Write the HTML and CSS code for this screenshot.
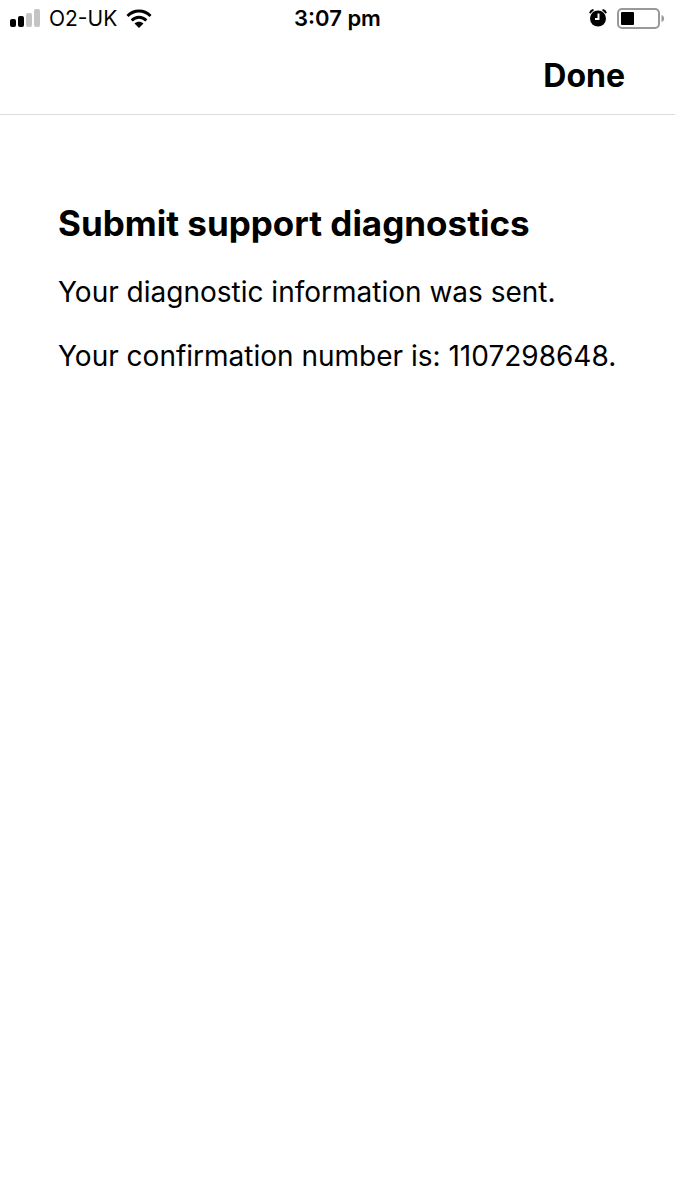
FILE: index.html
```html
<!DOCTYPE html>
<html lang="en">
<head>
    <meta charset="UTF-8">
    <meta name="viewport" content="width=device-width, initial-scale=1.0">
    <title>Submit support diagnostics</title>
    <link rel="stylesheet" href="styles.css">
</head>
<body>
    <div class="status-bar">
        <div class="carrier">
            <svg class="signal" width="30" height="18" viewBox="0 0 30 18" aria-hidden="true">
                <rect x="0" y="10" width="6" height="8" rx="2"/>
                <rect x="8" y="7" width="6" height="11" rx="2"/>
                <rect class="off" x="16" y="4" width="6" height="14" rx="2"/>
                <rect class="off" x="24" y="0" width="6" height="18" rx="2"/>
            </svg>
            <span>O2-UK</span>
            <svg class="wifi" width="26" height="19" viewBox="0 0 26 19" aria-hidden="true">
                <path d="M1.500 7C8 0.300 18 0.300 24.500 7"/>
                <path d="M5.700 11.500C10 7.200 16 7.200 20.300 11.500"/>
                <path class="dot" d="M13 19L8.500 14.500C11 12.200 15 12.200 17.500 14.500Z"/>
            </svg>
        </div>
        <div class="time">3:07 pm</div>
        <div class="indicators">
            <svg class="alarm" width="18" height="18" viewBox="0 0 18 18" aria-hidden="true">
                <circle cx="9" cy="9.500" r="8"/>
                <path class="bell" d="M1 4.200C1.500 2.500 2.800 1.200 4.500 0.900M17 4.200C16.500 2.500 15.200 1.200 13.500 0.900"/>
                <path class="hands" d="M9.500 4.500V10H6"/>
            </svg>
            <svg class="battery" width="48" height="21" viewBox="0 0 48 21" aria-hidden="true">
                <rect class="case" x="1" y="1" width="41" height="19" rx="4"/>
                <rect x="4" y="4" width="13" height="13" rx="1"/>
                <path class="tip" d="M44.500 7C48 8 48 13 44.500 14Z"/>
            </svg>
        </div>
    </div>

    <header>
        <button type="button" class="done">Done</button>
    </header>

    <main>
        <h1>Submit support diagnostics</h1>
        <p>Your diagnostic information was sent.</p>
        <p>Your confirmation number is: 1107298648.</p>
    </main>
</body>
</html>
```

FILE: styles.css
```css
body {
    margin: 0;
    background-color: #fff;
    color: #000;
    font-family: Inter, "Liberation Sans", sans-serif;
}
.status-bar {
    display: grid;
    grid-template-columns: 1fr auto 1fr;
    align-items: center;
    height: 36px;
    padding: 0 10px;
}
.carrier {
    display: flex;
    align-items: center;
    gap: 9px;
    font-size: 21px;
}
.signal .off {
    fill: #c4c4c4;
}
.wifi path {
    fill: none;
    stroke: #000;
    stroke-width: 3;
}
.wifi .dot {
    fill: #000;
    stroke: none;
}
.time {
    font-size: 22px;
    font-weight: 600;
}
.indicators {
    display: flex;
    align-items: center;
    justify-content: flex-end;
    gap: 10px;
}
.alarm .bell {
    fill: none;
    stroke: #000;
    stroke-width: 2;
}
.alarm .hands {
    fill: none;
    stroke: #fff;
    stroke-width: 2;
}
.battery .case {
    fill: none;
    stroke: #999;
    stroke-width: 2;
}
.battery .tip {
    fill: #999;
}
header {
    display: flex;
    align-items: center;
    justify-content: flex-end;
    height: 78px;
    padding: 0 50px;
    border-bottom: 1px solid #dcdcdc;
}
.done {
    padding: 0;
    border: none;
    background: none;
    color: inherit;
    font-family: inherit;
    font-size: 32px;
    font-weight: 700;
    cursor: pointer;
}
main {
    padding: 86px 58px;
}
h1 {
    margin: 0 0 27px;
    font-size: 35px;
    font-weight: 700;
    line-height: 44px;
}
p {
    margin: 0 0 24px;
    font-size: 28px;
    line-height: 40px;
}
```
